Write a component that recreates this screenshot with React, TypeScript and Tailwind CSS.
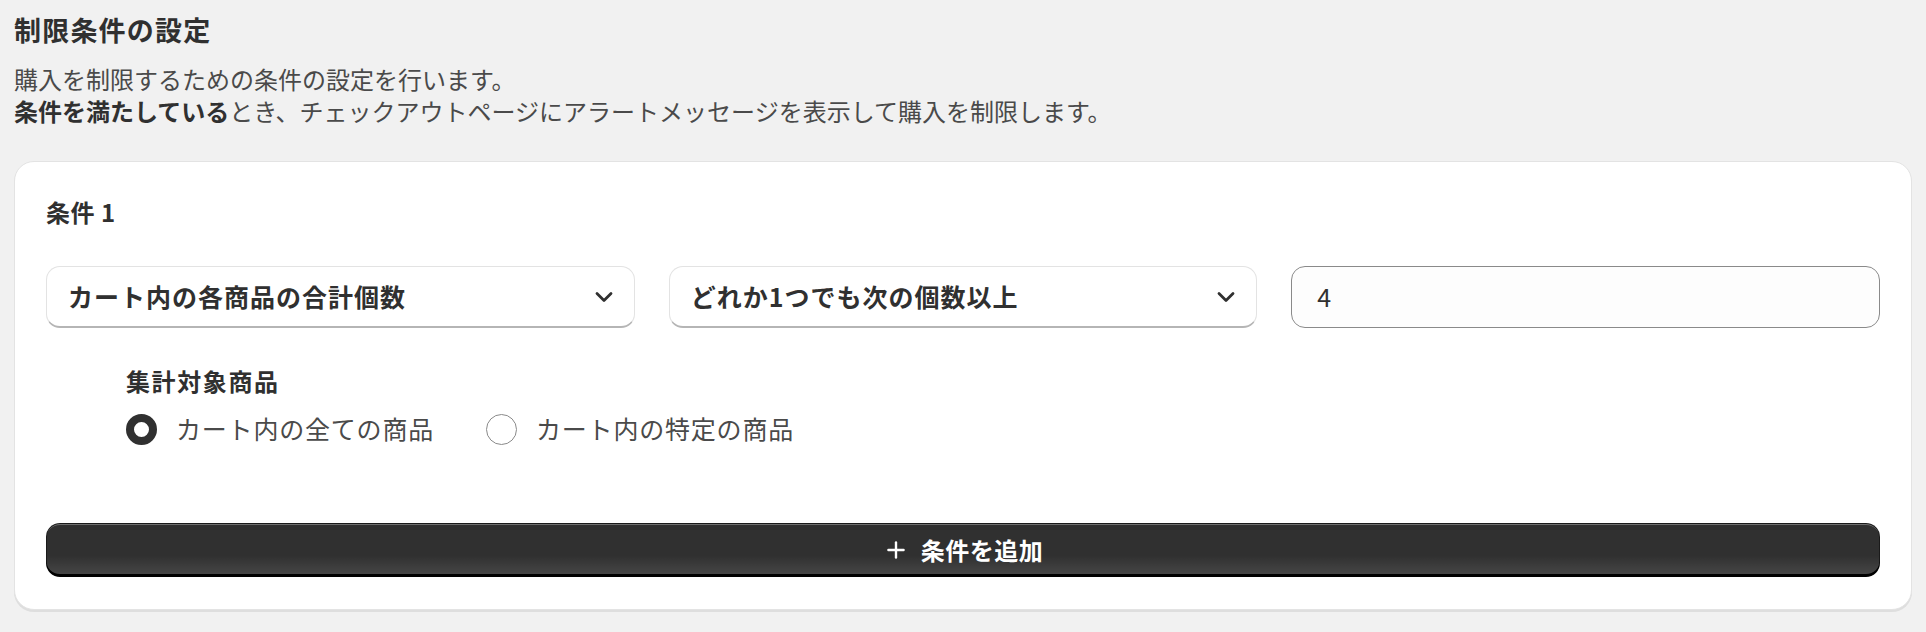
import { ChevronDown, Plus } from 'lucide-react';

const jp = { fontFamily: '"Noto Sans CJK JP", "Noto Sans", sans-serif' };

function SelectBox({ label }: { label: string }) {
  return (
    <div className="flex h-[62px] items-center justify-between rounded-[14px] border border-[#e3e3e3] border-b-[2px] border-b-[#b5b5b5] bg-white pl-[21px] pr-[16px]">
      <span className="text-[25px] font-semibold tracking-[1px] text-[#303030]">{label}</span>
      <ChevronDown className="h-[28px] w-[28px] text-[#303030]" strokeWidth={2.4} />
    </div>
  );
}

function Radio({ checked, label }: { checked?: boolean; label: string }) {
  return (
    <label className="flex items-center gap-[19px]">
      {checked ? (
        <span className="h-[31px] w-[31px] rounded-full border-[8px] border-[#303030] bg-white" />
      ) : (
        <span className="h-[31px] w-[31px] rounded-full border-[1.5px] border-[#8a8a8a] bg-white" />
      )}
      <span className="text-[25px] tracking-[0.8px] text-[#4a4a4a]">{label}</span>
    </label>
  );
}

export default function App() {
  return (
    <div className="min-h-screen bg-[#f1f1f1] pl-[14px] pr-[14px] pt-[12px]" style={jp}>
      {/* Heading */}
      <h1 className="text-[27px] font-semibold leading-[36px] tracking-[1.2px] text-[#303030]">制限条件の設定</h1>
      <div className="mt-[15px] text-[24px] leading-[32px] text-[#4a4a4a]">
        <p>購入を制限するための条件の設定を行います。</p>
        <p>
          <span className="font-bold text-[#303030]">条件を満たしている</span>
          とき、チェックアウトページにアラートメッセージを表示して購入を制限します。
        </p>
      </div>

      {/* Condition card */}
      <div className="mt-[34px] rounded-[20px] border border-[#e3e3e3] bg-white px-[31px] pb-[32px] pt-[31px] shadow-[0_2px_0_0_rgba(0,0,0,0.08)]">
        <h2 className="text-[24px] font-bold leading-[38px] tracking-[0.5px] text-[#303030]">条件 1</h2>

        <div className="mt-[35px] grid grid-cols-3 gap-[34px]">
          <SelectBox label="カート内の各商品の合計個数" />
          <SelectBox label="どれか1つでも次の個数以上" />
          <div className="flex h-[62px] items-center rounded-[14px] border border-[#8a8a8a] bg-[#fdfdfd] px-[25px]">
            <span className="text-[25px] text-[#303030]">4</span>
          </div>
        </div>

        <div className="ml-[80px] mt-[36px]">
          <div className="text-[24px] font-bold leading-[34px] tracking-[1.6px] text-[#303030]">集計対象商品</div>
          <div className="mt-[14px] flex h-[34px] items-center gap-[52px]">
            <Radio checked label="カート内の全ての商品" />
            <Radio label="カート内の特定の商品" />
          </div>
        </div>

        <button className="mt-[77px] flex h-[54px] w-full items-center justify-center gap-[12px] rounded-[14px] bg-[#303030] bg-[linear-gradient(180deg,rgba(48,48,48,0)_60%,rgba(255,255,255,0.12)_100%)] text-white shadow-[inset_0_-3px_0_0_#000,inset_0_0_0_1px_#1a1a1a,inset_0_2px_0_0_rgba(255,255,255,0.3)]">
          <Plus className="h-[26px] w-[26px]" strokeWidth={2.2} />
          <span className="text-[24px] font-semibold tracking-[0.5px]">条件を追加</span>
        </button>
      </div>
    </div>
  );
}
